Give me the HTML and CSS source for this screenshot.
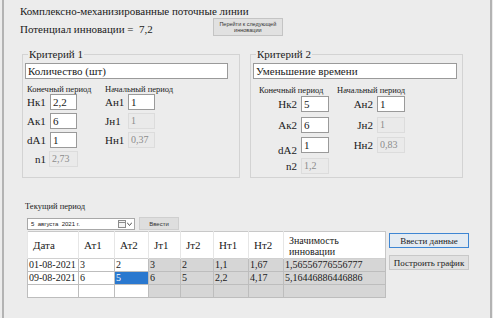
FILE: index.html
```html
<!DOCTYPE html>
<html lang="ru">
<head>
  <meta charset="UTF-8">
  <title>Комплексно-механизированные поточные линии</title>
  <link rel="stylesheet" href="styles.css">
</head>
<body>
  <div class="window">
    <div class="header">
      <div class="title">Комплексно-механизированные поточные линии</div>
      <div class="potential-row">
        <span class="potential">Потенциал инновации = &nbsp;7,2</span>
        <button class="next-button">Перейти к следующей<br>инновации</button>
      </div>
    </div>

    <div class="criteria">
      <fieldset class="criterion criterion-1">
        <legend>Критерий 1</legend>
        <div class="name-field">Количество (шт)</div>
        <div class="periods">
          <div class="period">
            <div class="period-label">Конечный период</div>
            <div class="pairs">
              <span class="key">Нк1</span><span class="field">2,2</span>
              <span class="key">Ак1</span><span class="field">6</span>
              <span class="key">dA1</span><span class="field">1</span>
              <span class="key key-right">n1</span><span class="field readonly">2,73</span>
            </div>
          </div>
          <div class="period">
            <div class="period-label">Начальный период</div>
            <div class="pairs">
              <span class="key">Ан1</span><span class="field">1</span>
              <span class="key">Јн1</span><span class="field readonly">1</span>
              <span class="key">Нн1</span><span class="field readonly">0,37</span>
            </div>
          </div>
        </div>
      </fieldset>

      <fieldset class="criterion criterion-2">
        <legend>Критерий 2</legend>
        <div class="name-field">Уменьшение времени</div>
        <div class="periods">
          <div class="period">
            <div class="period-label">Конечный период</div>
            <div class="pairs">
              <span class="key">Нк2</span><span class="field">5</span>
              <span class="key">Ак2</span><span class="field">6</span>
              <span class="key key-low">dA2</span><span class="field">1</span>
              <span class="key">n2</span><span class="field readonly">1,2</span>
            </div>
          </div>
          <div class="period">
            <div class="period-label">Начальный период</div>
            <div class="pairs">
              <span class="key">Ан2</span><span class="field">1</span>
              <span class="key">Јн2</span><span class="field readonly">1</span>
              <span class="key">Нн2</span><span class="field readonly">0,83</span>
            </div>
          </div>
        </div>
      </fieldset>
    </div>

    <div class="bottom">
      <div class="data-side">
        <div class="current-label">Текущий период</div>
        <div class="date-row">
          <div class="date-picker">
            <span>5 &nbsp;августа &nbsp;2021 г.</span>
            <span class="calendar">
              <svg width="8" height="8" viewBox="0 0 8 8"><rect x="0.5" y="0.5" width="7" height="7" fill="#f4f4f4" stroke="#8c8c8c"/><line x1="0.5" y1="2.5" x2="7.5" y2="2.5" stroke="#8c8c8c"/></svg>
              <svg width="5" height="4" viewBox="0 0 5 4"><path d="M0 0.5 L2.5 3.5 L5 0.5" fill="none" stroke="#555"/></svg>
            </span>
          </div>
          <button class="small-button">Ввести</button>
        </div>
        <table class="data-table">
          <colgroup>
            <col class="w-date"><col class="w-36"><col class="w-34"><col class="w-32"><col class="w-33"><col class="w-35"><col class="w-35"><col class="w-value">
          </colgroup>
          <thead>
            <tr>
              <th>Дата</th>
              <th>Ат1</th>
              <th>Ат2</th>
              <th>Јт1</th>
              <th>Јт2</th>
              <th>Нт1</th>
              <th>Нт2</th>
              <th class="c-value">Значимость<br>инновации</th>
            </tr>
          </thead>
          <tbody>
            <tr>
              <td>01-08-2021</td><td>3</td><td>2</td>
              <td class="calc">3</td><td class="calc">2</td><td class="calc">1,1</td><td class="calc">1,67</td><td class="calc">1,56556776556777</td>
            </tr>
            <tr>
              <td>09-08-2021</td><td>6</td><td class="selected">5</td>
              <td class="calc">6</td><td class="calc">5</td><td class="calc">2,2</td><td class="calc">4,17</td><td class="calc">5,16446886446886</td>
            </tr>
            <tr class="empty">
              <td></td><td></td><td></td>
              <td class="calc"></td><td class="calc"></td><td class="calc"></td><td class="calc"></td><td class="calc"></td>
            </tr>
          </tbody>
        </table>
      </div>
      <div class="actions">
        <button class="action-button default">Ввести данные</button>
        <button class="action-button">Построить график</button>
      </div>
    </div>
  </div>
</body>
</html>
```

FILE: styles.css
```css
* {
  margin: 0;
  padding: 0;
  box-sizing: border-box;
}

body {
  background-color: #ececec;
  font-family: 'Liberation Serif', 'Times New Roman', serif;
  color: #1a1a1a;
  padding: 0 1px 0 2px;
}

.window {
  height: 318px;
  border-left: 2px solid #b3b3b3;
  border-right: 2px solid #b3b3b3;
  padding: 4px 0 0 16px;
}

/* header */
.title {
  font-size: 11px;
  line-height: 14px;
}

.potential-row {
  display: flex;
  align-items: center;
  height: 18px;
}

.potential {
  font-size: 11px;
  line-height: 14px;
  margin-top: 3px;
}

.next-button {
  margin-left: 60px;
  width: 70px;
  height: 18px;
  font-family: 'Liberation Sans', Arial, sans-serif;
  font-size: 5.5px;
  line-height: 6px;
  color: #333;
  background: #e1e1e1;
  border: 1px solid #c4c4c4;
}

/* criteria group boxes */
.criteria {
  display: flex;
  gap: 10px;
  margin-top: 12px;
  margin-left: 2px;
}

.criterion {
  border: 1px solid #d3d3d3;
  height: 130px;
  padding: 3px 2px 0 2px;
}

.criterion legend {
  font-size: 11px;
  line-height: 12px;
  padding: 0 1px;
  margin-left: 3px;
}

.criterion-1 {
  width: 218px;
}

.criterion-2 {
  width: 213px;
}

.name-field {
  height: 16px;
  background: #fff;
  border: 1px solid #9a9a9a;
  font-size: 11px;
  line-height: 14px;
  padding-left: 2px;
}

.criterion-1 .name-field {
  width: 203px;
}

.criterion-2 .name-field {
  width: 204px;
}

.periods {
  display: flex;
}

.period-label {
  font-size: 8.5px;
  line-height: 9px;
  margin-top: 6px;
}

.pairs {
  display: grid;
  grid-template-columns: auto 27px;
  align-items: center;
  column-gap: 2px;
}

.key {
  font-size: 11px;
  line-height: 12px;
}

.key-right {
  text-align: right;
  padding-right: 2px;
}

.field {
  height: 16px;
  background: #fff;
  border: 1px solid #9a9a9a;
  font-size: 11px;
  line-height: 14px;
  padding-left: 2px;
}

.field.readonly {
  background: #eaeaea;
  border-color: #dcdcdc;
  color: #8c8c8c;
  font-size: 10px;
}

/* criterion 1 layout */
.criterion-1 .period-label {
  margin-left: 2px;
}

.criterion-1 .pairs {
  margin-top: 0;
  row-gap: 3px;
  margin-left: 2px;
  grid-template-columns: 21px 27px;
}

.criterion-1 .period:first-child {
  width: 78px;
}

.criterion-1 .period:first-child .field.readonly {
  width: 29px;
  margin-left: -1px;
}

/* criterion 2 layout */
.criterion-2 .period:first-child {
  width: 78px;
  margin-left: 6px;
}

.criterion-2 .period-label {
  margin-top: 7px;
}

.criterion-2 .pairs {
  margin-top: 1px;
  row-gap: 4.5px;
  grid-template-columns: 40px 28px;
}

.criterion-2 .key {
  text-align: right;
  padding-right: 2px;
}

.criterion-2 .period:last-child .pairs {
  grid-template-columns: 38px 28px;
}

.key-low {
  align-self: end;
  margin-bottom: -3px;
}

/* bottom part */
.bottom {
  display: flex;
  margin-top: 24px;
}

.data-side {
  margin-left: 7px;
}

.current-label {
  font-size: 8.5px;
  line-height: 9px;
  margin-left: -2px;
}

.date-row {
  display: flex;
  gap: 4px;
  margin-top: 7px;
}

.date-picker {
  width: 108px;
  height: 12px;
  background: #fff;
  border: 1px solid #a8a8a8;
  font-family: 'Liberation Sans', Arial, sans-serif;
  font-size: 6px;
  line-height: 10px;
  padding-left: 3px;
  display: flex;
  justify-content: space-between;
  align-items: center;
}

.calendar {
  display: flex;
  align-items: center;
  gap: 1px;
  padding-right: 2px;
}

.small-button {
  width: 40px;
  height: 13px;
  margin-top: -1px;
  background: #dedede;
  border: 1px solid #cfcfcf;
  font-family: 'Liberation Sans', Arial, sans-serif;
  font-size: 6px;
  color: #333;
}

.data-table {
  margin-top: 1px;
  border-collapse: collapse;
  table-layout: fixed;
  background: #fff;
  border: 1px solid #c8c8c8;
  font-size: 10px;
  width: 358px;
}

.w-date { width: 51px; }
.w-32 { width: 32px; }
.w-33 { width: 33px; }
.w-34 { width: 34px; }
.w-35 { width: 35px; }
.w-36 { width: 36px; }
.w-value { width: 102px; }

.data-table th {
  font-weight: normal;
  font-size: 11px;
  text-align: left;
  height: 27px;
  padding: 0 0 0 5px;
  border-left: 1px solid #e6e6e6;
  line-height: 11px;
}

.data-table th.c-value {
  font-size: 10px;
  vertical-align: top;
  padding-top: 3px;
}

.data-table td {
  height: 13px;
  padding: 0 0 0 1px;
  line-height: 12px;
  white-space: nowrap;
  overflow: hidden;
  border: 1px solid #bdbdbd;
  border-top-color: #d0d0d0;
}

.data-table td.calc {
  background: #d6d6d6;
}

.data-table td.selected {
  background: #2a78cf;
  color: #fff;
}

.actions {
  display: flex;
  flex-direction: column;
  gap: 7px;
  margin-left: 3px;
  padding-top: 31px;
}

.action-button {
  width: 80px;
  height: 15px;
  font-family: 'Liberation Serif', 'Times New Roman', serif;
  font-size: 9px;
  color: #222;
  background: #e1e1e1;
  border: 1px solid #c8c8c8;
}

.action-button.default {
  border: 1px solid #3e86d3;
  background: #e4ebf2;
}
```
